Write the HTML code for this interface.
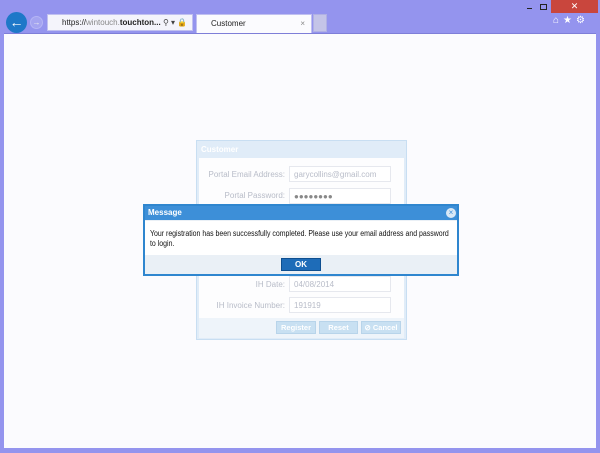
<!DOCTYPE html>
<html><head><style>
*{box-sizing:border-box;margin:0;padding:0}
body{width:600px;height:453px;overflow:hidden;background:#9494ee;font-family:"Liberation Sans",Arial,sans-serif;position:relative}
.abs{position:absolute}
.content{left:4px;top:33px;width:592px;height:415px;background:#fbfbfe;border-top:1px solid #7e7ed8}
.lbl{font-size:8px;color:#b8bcc8;text-align:right;width:90px}
.inp{border:1px solid #e6e8ee;background:#fff;height:16px;font-size:8px;color:#b8bcc8;padding:3px 4px;width:102px}
.btn{background:#c8e0f2;border:1px solid #b8d4ea;color:#fff;font-size:7.5px;font-weight:bold;text-align:center;height:13px;line-height:12px}
</style></head><body>
<div class="abs" style="left:551px;top:0;width:47px;height:13px;background:#c9463d;color:#fff;font-size:9px;text-align:center;line-height:13px">✕</div>
<div class="abs" style="left:527px;top:8px;width:5px;height:1px;background:#222"></div>
<div class="abs" style="left:540px;top:4px;width:7px;height:6px;border:1px solid #222"></div>
<div class="abs" style="left:553px;top:15px;font-size:10px;color:#fff;letter-spacing:4px">⌂★⚙</div>
<div class="abs" style="left:6px;top:12px;width:21px;height:21px;border-radius:50%;background:#1e78c8;color:#fff;font-size:14px;line-height:20px;text-align:center;font-weight:bold">←</div>
<div class="abs" style="left:30px;top:16px;width:13px;height:13px;border-radius:50%;border:1px solid #b5b5f5;background:#a4a4f0;color:#eee;font-size:8px;line-height:11px;text-align:center">→</div>
<div class="abs" style="left:47px;top:14px;width:146px;height:17px;background:#f4f4fb;border:1px solid #c0c0f0;font-size:8px;line-height:15px;padding-left:14px;color:#222">https://<span style="color:#888">wintouch.</span><b>touchton...</b> <span style="color:#444">⚲ ▾ 🔒 ↻</span></div>
<div class="abs" style="left:196px;top:14px;width:116px;height:19px;background:#fbfbfe;border:1px solid #c0c0f0;border-bottom:none;font-size:8px;line-height:17px;padding-left:14px;color:#222">Customer<span style="position:absolute;right:6px;color:#888">×</span></div>
<div class="abs" style="left:313px;top:14px;width:14px;height:18px;background:#c4c4e8;border:1px solid #b0b0e4"></div>
<div class="abs content"></div>
<div class="abs" style="left:196px;top:140px;width:211px;height:200px;background:#e0ecf8;border:1px solid #c8def2"></div>
<div class="abs" style="left:201px;top:145px;font-size:8px;font-weight:bold;color:#fff">Customer</div>
<div class="abs" style="left:199px;top:158px;width:205px;height:160px;background:#fdfdfe"></div>
<div class="abs lbl" style="left:195px;top:170px">Portal Email Address:</div>
<div class="abs inp" style="left:289px;top:166px">garycollins@gmail.com</div>
<div class="abs lbl" style="left:195px;top:191px">Portal Password:</div>
<div class="abs inp" style="left:289px;top:188px;color:#888">●●●●●●●●</div>
<div class="abs lbl" style="left:195px;top:280px">IH Date:</div>
<div class="abs inp" style="left:289px;top:276px">04/08/2014</div>
<div class="abs lbl" style="left:195px;top:301px">IH Invoice Number:</div>
<div class="abs inp" style="left:289px;top:297px">191919</div>
<div class="abs" style="left:199px;top:318px;width:205px;height:20px;background:#eef4fa"></div>
<div class="abs btn" style="left:276px;top:321px;width:40px">Register</div>
<div class="abs btn" style="left:319px;top:321px;width:39px">Reset</div>
<div class="abs btn" style="left:361px;top:321px;width:40px">⊘ Cancel</div>
<div class="abs" style="left:143px;top:204px;width:316px;height:72px;background:#eaf0f6;border:2px solid #2f86cf"></div>
<div class="abs" style="left:145px;top:206px;width:312px;height:14px;background:#3d8fd8;color:#fff;font-size:8px;font-weight:bold;line-height:14px;padding-left:3px">Message</div>
<div class="abs" style="left:446px;top:208px;width:10px;height:10px;border-radius:50%;background:#d8e8f6;color:#3d8fd8;font-size:8px;line-height:10px;text-align:center">×</div>
<div class="abs" style="left:145px;top:221px;width:312px;height:34px;background:#fff"></div>
<div class="abs" style="left:150px;top:229px;font-size:8px;color:#111;line-height:10px;white-space:nowrap;transform:scaleX(0.87);transform-origin:0 0">Your registration has been successfully completed. Please use your email address and password<br>to login.</div>
<div class="abs" style="left:281px;top:258px;width:40px;height:13px;background:#1e6cb8;border:1px solid #0e4f90;color:#fff;font-size:8px;font-weight:bold;text-align:center;line-height:11px">OK</div>
</body></html>
